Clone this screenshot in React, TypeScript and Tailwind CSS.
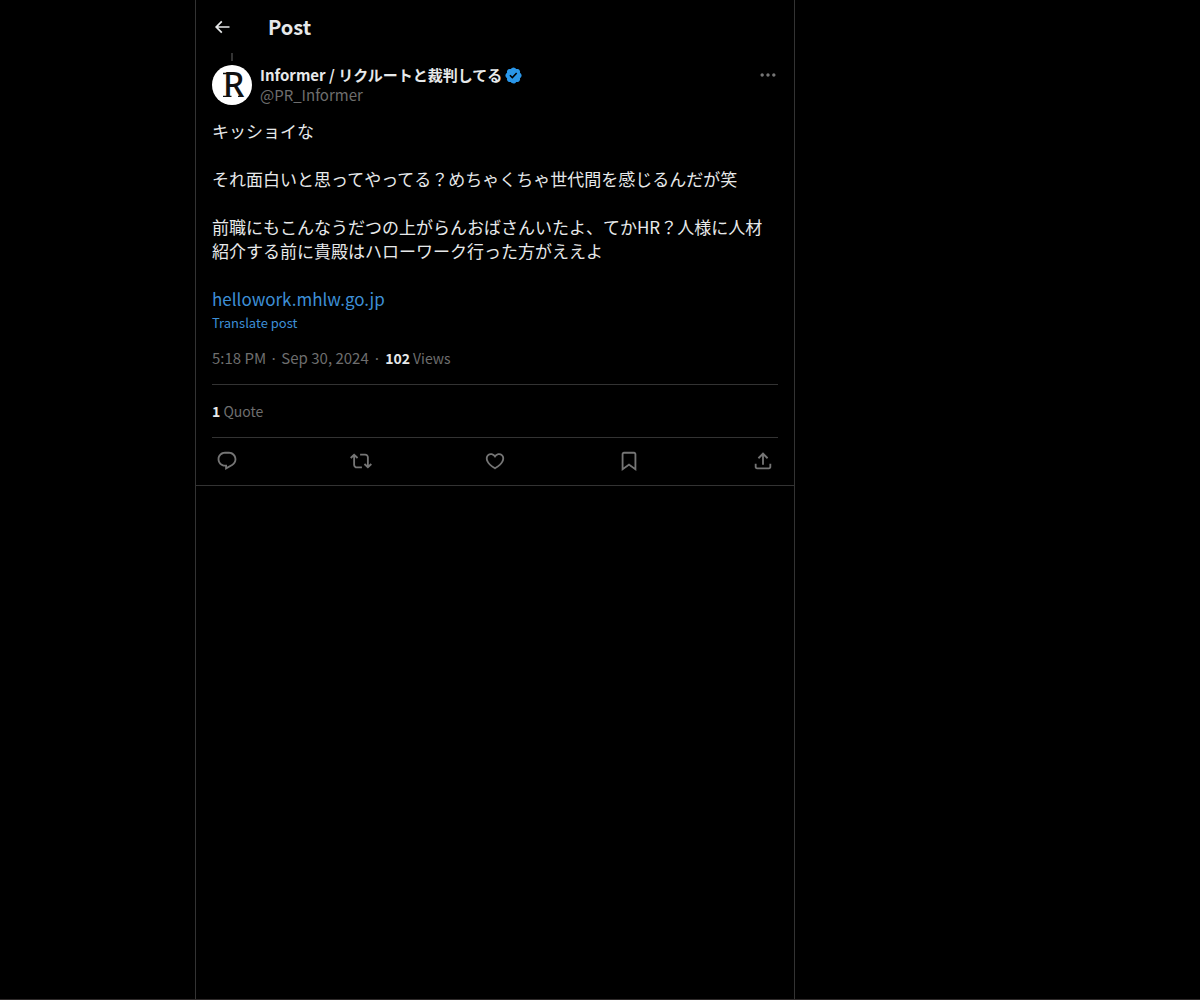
import React from "react";

const icons = {
    back: "M7.414 13l5.043 5.04-1.414 1.42L3.586 12l7.457-7.46 1.414 1.42L7.414 11H21v2H7.414z",
    more: "M3 12c0-1.1.9-2 2-2s2 .9 2 2-.9 2-2 2-2-.9-2-2zm9 2c1.1 0 2-.9 2-2s-.9-2-2-2-2 .9-2 2 .9 2 2 2zm7 0c1.1 0 2-.9 2-2s-.9-2-2-2-2 .9-2 2 .9 2 2 2z",
    reply: "M1.751 10c0-4.42 3.584-8 8.005-8h4.366c4.49 0 8.129 3.64 8.129 8.13 0 2.96-1.607 5.68-4.196 7.11l-8.054 4.46v-3.69h-.067c-4.49.1-8.183-3.51-8.183-8.01zm8.005-6c-3.317 0-6.005 2.69-6.005 6 0 3.37 2.77 6.08 6.138 6.01l.351-.01h1.761v2.3l5.087-2.81c1.951-1.08 3.163-3.13 3.163-5.36 0-3.39-2.744-6.13-6.129-6.13H9.756z",
    repost: "M4.5 3.88l4.432 4.14-1.364 1.46L5.5 7.55V16c0 1.1.896 2 2 2H13v2H7.5c-2.209 0-4-1.79-4-4V7.55L1.432 9.48.068 8.02 4.5 3.88zM16.5 6H11V4h5.5c2.209 0 4 1.79 4 4v8.45l2.068-1.93 1.364 1.46-4.432 4.14-4.432-4.14 1.364-1.46 2.068 1.93V8c0-1.1-.896-2-2-2z",
    like: "M16.697 5.5c-1.222-.06-2.679.51-3.89 2.16l-.805 1.09-.806-1.09C9.984 6.01 8.526 5.44 7.304 5.5c-1.243.07-2.349.78-2.91 1.91-.552 1.12-.633 2.78.479 4.82 1.074 1.97 3.257 4.27 7.129 6.61 3.87-2.34 6.052-4.64 7.126-6.61 1.111-2.04 1.03-3.7.477-4.82-.561-1.13-1.666-1.84-2.908-1.91zm4.187 7.69c-1.351 2.48-4.001 5.12-8.379 7.67l-.503.3-.504-.3c-4.379-2.55-7.029-5.19-8.382-7.67-1.36-2.5-1.41-4.86-.514-6.67.887-1.79 2.647-2.91 4.601-3.01 1.651-.09 3.368.56 4.798 2.01 1.429-1.45 3.146-2.1 4.796-2.01 1.954.1 3.714 1.22 4.601 3.01.896 1.81.846 4.17-.514 6.67z",
    bookmark: "M4 4.5C4 3.12 5.119 2 6.5 2h11C18.881 2 20 3.12 20 4.5v18.44l-8-5.71-8 5.71V4.5zM6.5 4c-.276 0-.5.22-.5.5v14.56l6-4.29 6 4.29V4.5c0-.28-.224-.5-.5-.5h-11z",
    share: "M12 2.59l5.7 5.7-1.41 1.42L13 6.41V16h-2V6.41l-3.3 3.3-1.41-1.42L12 2.59zM21 15l-.02 3.51c0 1.38-1.12 2.49-2.5 2.49H5.5C4.11 21 3 19.88 3 18.5V15h2v3.5c0 .28.22.5.5.5h12.98c.28 0 .5-.22.5-.5L19 15h2z",
    verified: "M20.396 11c-.018-.646-.215-1.275-.57-1.816-.354-.54-.852-.972-1.438-1.246.223-.607.27-1.264.14-1.897-.131-.634-.437-1.218-.882-1.687-.47-.445-1.053-.75-1.687-.882-.633-.13-1.29-.083-1.897.14-.273-.587-.704-1.086-1.245-1.44S11.647 1.62 11 1.604c-.646.017-1.273.213-1.813.568s-.969.854-1.24 1.44c-.608-.223-1.267-.272-1.902-.14-.635.13-1.22.436-1.69.882-.445.47-.749 1.055-.878 1.688-.13.633-.08 1.29.144 1.896-.587.274-1.087.705-1.443 1.245-.356.54-.555 1.17-.574 1.817.02.647.218 1.276.574 1.817.356.54.856.972 1.443 1.245-.224.606-.274 1.263-.144 1.896.13.634.433 1.218.877 1.688.47.443 1.054.747 1.687.878.633.132 1.29.084 1.897-.136.274.586.705 1.084 1.246 1.439.54.354 1.17.551 1.816.569.647-.016 1.276-.213 1.817-.567s.972-.854 1.245-1.44c.604.239 1.266.296 1.903.164.636-.132 1.22-.447 1.68-.907.46-.46.776-1.044.908-1.681s.075-1.299-.165-1.903c.586-.274 1.084-.705 1.439-1.246.354-.54.551-1.17.569-1.816zM9.662 14.85l-3.429-3.428 1.293-1.302 2.072 2.072 4.4-4.794 1.347 1.246z",
};

const actions = [
    { label: "Reply", path: icons.reply },
    { label: "Repost", path: icons.repost },
    { label: "Like", path: icons.like },
    { label: "Bookmark", path: icons.bookmark },
    { label: "Share", path: icons.share },
];

const Icon = ({ path, className, box = 24 }: { path: string; className: string; box?: number }) => (
    <svg viewBox={`0 0 ${box} ${box}`} fill="currentColor" aria-hidden="true" className={className}>
        <path d={path} />
    </svg>
);

const Avatar = () => (
    <a href="#profile" aria-label="Informer" className="block size-10 shrink-0 rounded-full bg-white text-[#111111]">
        <svg viewBox="0 0 40 40" className="size-10 overflow-visible" fill="currentColor">
            <text x="11" y="32" fontSize="34" fontWeight="500" fontFamily="'Noto Sans', sans-serif">
                R
            </text>
            {/* small serifs on the stem and the leg */}
            <path d="M11 7.8h4v1.4h-4zM11 30.8h8.5V32H11zM26 30.8h4.5V32H26z" />
        </svg>
    </a>
);

const App = () => {
    return (
        <div className="grid min-h-screen grid-cols-[13fr_minmax(0,600px)_27fr] border-b border-[#2f2b2b] bg-black font-['Noto_Sans_CJK_JP',sans-serif] text-[#e7e9ea]">
            <main className="col-start-2 border-x border-[#333333]">
                <header className="flex h-[53px] items-center px-4">
                    <button type="button" aria-label="Back" className="w-14">
                        <Icon path={icons.back} className="size-5" />
                    </button>
                    <h1 className="text-xl font-bold">Post</h1>
                </header>

                <article className="border-b border-[#333333]">
                    <div className="px-4">
                        <div className="flex h-3 w-10 justify-center">
                            <div className="h-2 w-0.5 bg-[#333333]"></div>
                        </div>

                        <div className="flex gap-2">
                            <Avatar />
                            <div className="min-w-0 grow text-[15px] leading-5">
                                <div className="flex items-center gap-0.5 font-bold">
                                    <span>Informer / リクルートと裁判してる</span>
                                    <Icon path={icons.verified} box={22} className="size-[19px] text-[#2a96e8]" />
                                </div>
                                <div className="text-[#6e6e6e]">@PR_Informer</div>
                            </div>
                            <button type="button" aria-label="More" className="h-5 text-[#757575]">
                                <Icon path={icons.more} className="size-5" />
                            </button>
                        </div>

                        <div className="mt-3.5 text-[17px] leading-6">
                            <p>キッショイな</p>
                            <p className="mt-6">それ面白いと思ってやってる？めちゃくちゃ世代間を感じるんだが笑</p>
                            <p className="mt-6">
                                前職にもこんなうだつの上がらんおばさんいたよ、てかHR？人様に人材紹介する前に貴殿はハローワーク行った方がええよ
                            </p>
                            <p className="mt-6">
                                <a href="https://hellowork.mhlw.go.jp" className="text-[#3d8fd6]">hellowork.mhlw.go.jp</a>
                            </p>
                        </div>
                        <button type="button" className="block text-[13px] leading-6 text-[#3d8fd6]">Translate post</button>

                        <div className="mt-[13px] mb-4 flex items-baseline gap-1 text-[15px] leading-5 text-[#6e6e6e]">
                            <a href="#post">5:18 PM · Sep 30, 2024</a>
                            <span>·</span>
                            <span className="text-sm leading-5">
                                <b className="text-[#e7e9ea]">102</b> Views
                            </span>
                        </div>

                        <div className="border-y border-[#333333] py-4 text-sm leading-5 text-[#6e6e6e]">
                            <a href="#quotes">
                                <b className="text-[#e7e9ea]">1</b> Quote
                            </a>
                        </div>

                        <div className="flex items-center justify-between pt-3 pb-[13px] text-[#757575]">
                            {actions.map((action) => (
                                <button key={action.label} type="button" aria-label={action.label} className="flex w-[30px] justify-center">
                                    <Icon path={action.path} className="size-[22px]" />
                                </button>
                            ))}
                        </div>
                    </div>
                </article>
            </main>
        </div>
    );
};

export default App;
